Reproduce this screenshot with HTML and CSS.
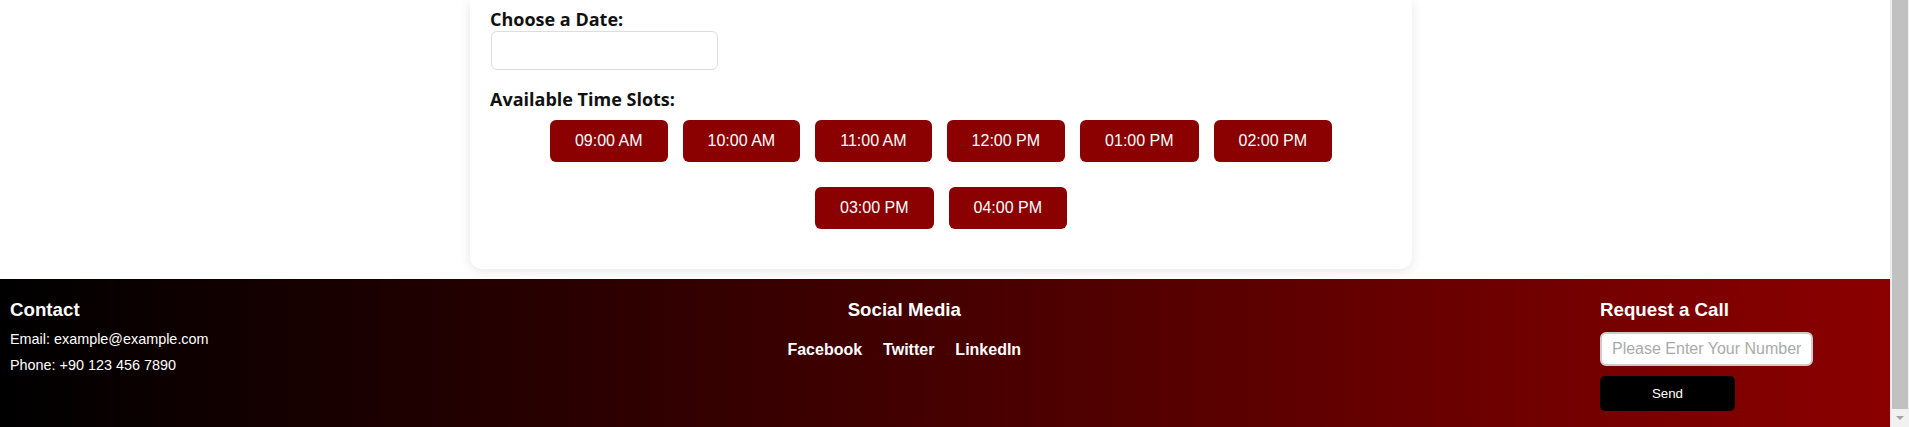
FILE: index.html
```html
<!DOCTYPE html>
<html lang="en">
<head>
<meta charset="utf-8">
<title>Appointment</title>
<link rel="stylesheet" href="styles.css">
</head>
<body>
<div class="viewport">
  <main class="page">
    <section class="card">
      <label class="field-label" for="date">Choose a Date:</label>
      <input class="date-input" id="date" type="text">
      <h4 class="slots-label">Available Time Slots:</h4>
      <div class="slots">
        <button class="slot">09:00 AM</button>
        <button class="slot">10:00 AM</button>
        <button class="slot">11:00 AM</button>
        <button class="slot">12:00 PM</button>
        <button class="slot">01:00 PM</button>
        <button class="slot">02:00 PM</button>
        <button class="slot">03:00 PM</button>
        <button class="slot">04:00 PM</button>
      </div>
    </section>
  </main>
  <footer class="footer">
    <div class="col contact">
      <h3 class="col-title">Contact</h3>
      <p class="line">Email: example@example.com</p>
      <p class="line">Phone: +90 123 456 7890</p>
    </div>
    <div class="col social">
      <h3 class="col-title">Social Media</h3>
      <nav class="social-links">
        <a href="#">Facebook</a>
        <a href="#">Twitter</a>
        <a href="#">LinkedIn</a>
      </nav>
    </div>
    <div class="col call">
      <h3 class="col-title">Request a Call</h3>
      <input class="phone-input" type="text" placeholder="Please Enter Your Number">
      <button class="send">Send</button>
    </div>
  </footer>
</div>
<div class="scrollbar" aria-hidden="true">
  <div class="scroll-thumb"></div>
  <div class="scroll-arrow"></div>
</div>
</body>
</html>
```
FILE: styles.css
```css
html, body {
  margin: 0;
  padding: 0;
  background: #fff;
}

body {
  display: flex;
  height: 427px;
  overflow: hidden;
}

.viewport {
  width: 1890px;
  flex: none;
  display: flex;
  flex-direction: column;
}

.page {
  padding: 0 8px 10px 0;
}

.card {
  box-sizing: border-box;
  width: 942px;
  margin: 0 auto;
  background: #fff;
  border-radius: 0 0 12px 12px;
  box-shadow: 0 2px 12px rgba(0, 0, 0, 0.1);
  padding: 7px 20px 40px;
  font-family: "Open Sans", "Noto Sans", sans-serif;
  color: #111;
}

.field-label {
  display: block;
  font-size: 18px;
  font-weight: 700;
}

.date-input {
  display: block;
  box-sizing: border-box;
  width: 227px;
  height: 39px;
  margin: 0 0 0 1px;
  border: 1px solid #ddd;
  border-radius: 6px;
  background: #fff;
  outline: none;
}

.slots-label {
  margin: 17px 0 0;
  font-size: 18px;
  font-weight: 700;
}

.slots {
  display: flex;
  flex-wrap: wrap;
  justify-content: center;
  gap: 25px 15px;
  margin-top: 9px;
}

.slot {
  font-family: "Liberation Sans", Arial, sans-serif;
  font-size: 16px;
  color: #fff;
  background: #8b0000;
  border: none;
  border-radius: 6px;
  padding: 12px 25px;
  line-height: normal;
}

.footer {
  flex: 1;
  display: flex;
  justify-content: space-between;
  padding: 20px 10px 0;
  background: linear-gradient(to right, #000, #8b0000);
  color: #fff;
  font-family: "Liberation Sans", Arial, sans-serif;
}

.col-title {
  margin: 0;
  font-size: 18.72px;
  font-weight: 700;
}

.line {
  margin: 10px 0 0;
  font-size: 14.4px;
}

.social {
  text-align: center;
}

.social-links {
  display: flex;
  justify-content: center;
  gap: 21px;
  margin-top: 20px;
}

.social-links a {
  color: #fff;
  font-weight: 700;
  font-size: 16px;
  text-decoration: none;
}

.call {
  width: 280px;
  display: flex;
  flex-direction: column;
  align-items: flex-start;
}

.phone-input {
  box-sizing: border-box;
  width: 213px;
  height: 34px;
  margin-top: 11px;
  padding: 0 10px;
  border: 2px solid #ccc;
  border-radius: 6px;
  font-family: "Liberation Sans", Arial, sans-serif;
  font-size: 16px;
  background: #fff;
  outline: none;
}

.phone-input::placeholder {
  color: #aaa;
}

.send {
  box-sizing: border-box;
  width: 135px;
  height: 35px;
  margin-top: 10px;
  border: none;
  border-radius: 5px;
  background: #000;
  color: #fff;
  font-family: "Liberation Sans", Arial, sans-serif;
  font-size: 13.33px;
}

.scrollbar {
  flex: 1;
  display: flex;
  flex-direction: column;
  background: #f1f1f1;
  border-left: 1px solid #e8e8e8;
  padding: 0 1px 0 1px;
}

.scroll-thumb {
  flex: 1;
  background: #c1c1c1;
}

.scroll-arrow {
  height: 18px;
  display: flex;
  align-items: center;
  justify-content: center;
}

.scroll-arrow::before {
  content: "";
  border-left: 4px solid transparent;
  border-right: 4px solid transparent;
  border-top: 4px solid #a3a3a3;
}
```
